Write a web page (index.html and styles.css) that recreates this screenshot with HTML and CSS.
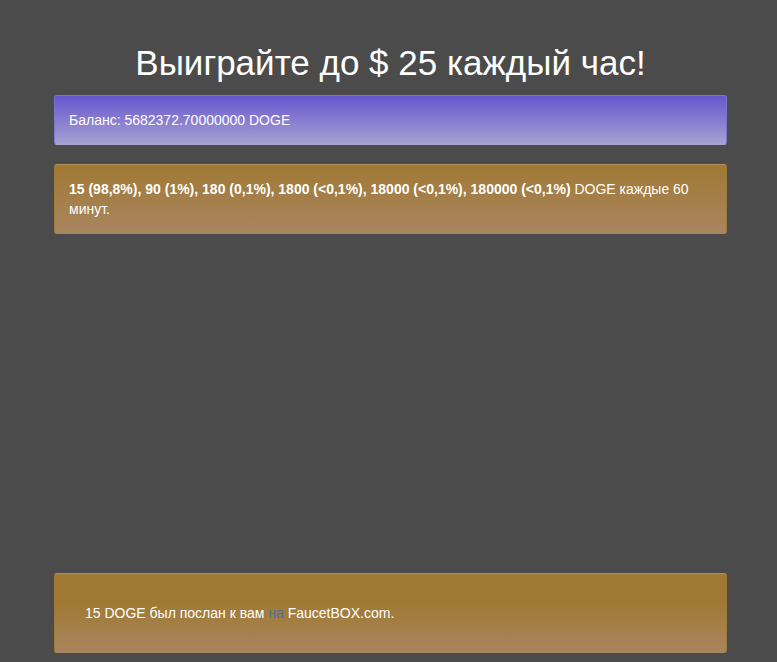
FILE: index.html
```html
<!DOCTYPE html>
<html lang="ru">
<head>
<meta charset="utf-8">
<title>Faucet</title>
<link rel="stylesheet" href="styles.css">
</head>
<body>
<div class="container">
  <h1 class="title">Выиграйте до $ 25 каждый час!</h1>
  <div class="alert alert-balance">Баланс: 5682372.70000000 DOGE</div>
  <div class="alert alert-reward"><b>15 (98,8%), 90 (1%), 180 (0,1%), 1800 (&lt;0,1%), 18000 (&lt;0,1%), 180000 (&lt;0,1%)</b> DOGE каждые 60 минут.</div>
  <div class="spacer"></div>
  <div class="alert alert-sent"><div class="sent-inner">15 DOGE был послан к вам <a href="#" class="link">на</a> FaucetBOX.com.</div></div>
</div>
</body>
</html>
```
FILE: styles.css
```css
html, body {
  margin: 0;
  padding: 0;
  background: #4b4b4b;
}
body {
  font-family: "Liberation Sans", Arial, Helvetica, sans-serif;
  font-size: 14px;
  line-height: 20px;
  color: #ffffff;
}
.container {
  width: 673px;
  margin: 0 auto;
  padding-left: 4px;
  padding-top: 44px;
}
.title {
  margin: 0 0 12.5px 0;
  font-size: 35px;
  font-weight: normal;
  line-height: 1.1;
  text-align: center;
  color: #ffffff;
}
.alert {
  padding: 14px;
  border: 1px solid transparent;
  border-radius: 3px;
  margin-bottom: 19px;
}
.alert-balance {
  background: linear-gradient(to bottom, #6656cf 0%, #a8a1d2 100%);
  border-color: #7d72d2 #7d72d2 #a9a3d3;
}
.alert-reward {
  background: linear-gradient(to bottom, #a07934 0%, #a9855f 100%);
  border-color: #b0915a #a07934 #a9855f;
}
.spacer {
  height: 320px;
}
.alert-sent {
  padding: 29px 30px;
  background: linear-gradient(to bottom, #a07a35 0%, #a07a35 40%, #a9855f 100%);
  border-color: #b0915a #a07a35 #a9855f;
}
.link {
  color: #4272bd;
  text-decoration: none;
}
```
